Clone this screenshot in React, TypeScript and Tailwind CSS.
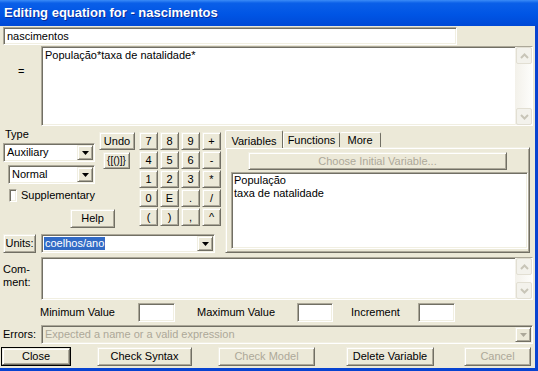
import React from "react";

const raised =
  "border border-t-[#f1efe2] border-l-[#f1efe2] border-r-[#716f64] border-b-[#716f64] shadow-[inset_1px_1px_0_#ffffff,inset_-1px_-1px_0_#aca899]";
const sunken =
  "border border-t-[#aca899] border-l-[#aca899] border-r-white border-b-white shadow-[inset_1px_1px_0_#716f64,inset_-1px_-1px_0_#f1efe2]";

function Btn({
  children,
  className = "",
  disabled,
}: {
  children: React.ReactNode;
  className?: string;
  disabled?: boolean;
}) {
  return (
    <div
      className={`flex items-center justify-center bg-[#ece9d8] leading-none ${raised} ${
        disabled ? "text-[#aca899]" : "text-black"
      } ${className}`}
    >
      {children}
    </div>
  );
}

function Arrow({ color = "#000" }: { color?: string }) {
  return (
    <svg width="7" height="4" viewBox="0 0 7 4">
      <path d="M0 0h7L3.5 4z" fill={color} />
    </svg>
  );
}

function DropBtn({ disabled }: { disabled?: boolean }) {
  return (
    <div className={`w-[16px] h-full flex items-center justify-center bg-[#ece9d8] ${raised}`}>
      <Arrow color={disabled ? "#aca899" : "#000"} />
    </div>
  );
}

function ScrollBtn({ up }: { up?: boolean }) {
  return (
    <div className="h-[17px] w-[16px] rounded-[2px] border border-[#e2dfd3] bg-[#f3f2ec] flex items-center justify-center">
      <svg width="9" height="6" viewBox="0 0 9 6">
        <path
          d={up ? "M1 5l3.5-3.5L8 5" : "M1 1l3.5 3.5L8 1"}
          fill="none"
          stroke="#c8c5b8"
          strokeWidth="2"
        />
      </svg>
    </div>
  );
}

function Scrollbar() {
  return (
    <div className="w-[17px] h-full flex flex-col justify-between bg-[linear-gradient(90deg,#f3f1ea,#fdfdfb)] pl-[1px]">
      <ScrollBtn up />
      <ScrollBtn />
    </div>
  );
}

// keypad, read row by row
const KEYS = ["7", "8", "9", "+", "4", "5", "6", "-", "1", "2", "3", "*", "0", "E", ".", "/", "(", ")", ",", "^"];

export default function App() {
  return (
    <div className="w-[538px] h-[371px] flex flex-col overflow-hidden font-['Liberation_Sans',Arial,sans-serif] text-[11px] text-black">
      {/* Title bar */}
      <div className="h-[26px] shrink-0 flex items-center pl-[4px] bg-[linear-gradient(180deg,#3b8cf7_0%,#0a5fe8_12%,#0055e5_55%,#0049d6_100%)]">
        <span className="text-white font-bold text-[13px] [text-shadow:1px_1px_0_#0a2d9a]">
          Editing equation for - nascimentos
        </span>
      </div>

      <div className="flex-1 flex flex-col bg-[#ece9d8] border-r-[3px] border-b-[3px] border-[#0843d0] overflow-hidden">
        {/* Name */}
        <div className={`ml-[3px] mt-[1px] w-[454px] h-[18px] bg-white pl-[3px] leading-[16px] ${sunken}`}>
          nascimentos
        </div>

        {/* Equation */}
        <div className="flex mt-[1px] h-[80px]">
          <div className="w-[41px] pt-[19px] pl-[18px] leading-[13px]">=</div>
          <div className={`w-[492px] h-full flex bg-white ${sunken}`}>
            <div className="flex-1 pl-[3px] pt-[2px] leading-[13px]">População*taxa de natalidade*</div>
            <Scrollbar />
          </div>
        </div>

        {/* Middle */}
        <div className="flex mt-[1px] h-[126px]">
          <div className="w-[225px] flex flex-col">
            <div className="flex h-[105px]">
              {/* Type column */}
              <div className="w-[95px] pl-[3px] flex flex-col">
                <div className="mt-[1px] h-[13px] leading-[13px] pl-[2px]">Type</div>
                <div className={`mt-[2px] h-[19px] w-[92px] flex bg-white ${sunken} p-[1px]`}>
                  <div className="flex-1 pl-[2px] leading-[15px]">Auxiliary</div>
                  <DropBtn />
                </div>
                <div className={`ml-[5px] mt-[3px] h-[19px] w-[87px] flex bg-white ${sunken} p-[1px]`}>
                  <div className="flex-1 pl-[2px] leading-[15px]">Normal</div>
                  <DropBtn />
                </div>
                <div className="mt-[4px] h-[14px] flex items-center ml-[6px]">
                  <div className={`w-[13px] h-[13px] bg-white ${sunken}`} />
                  <span className="ml-[4px]">Supplementary</span>
                </div>
                <Btn className="ml-[67px] mt-[7px] w-[45px] h-[19px]">Help</Btn>
              </div>

              {/* Undo column */}
              <div className="ml-[4px] w-[36px] pt-[5px] flex flex-col">
                <Btn className="w-[36px] h-[18px]">Undo</Btn>
                <Btn className="ml-[4px] mt-[2px] w-[27px] h-[17px] text-[10px]">{"{[()]}"}</Btn>
              </div>

              {/* Keypad */}
              <div className="ml-[4px] pt-[5px]">
                <div className="grid grid-cols-[repeat(4,19px)] auto-rows-[18px] gap-x-[2px] gap-y-[1px]">
                  {KEYS.map((k) => (
                    <Btn key={k} className="w-[19px] h-[18px]">
                      {k}
                    </Btn>
                  ))}
                </div>
              </div>
            </div>

            {/* Units */}
            <div className="flex mt-[2px] h-[19px]">
              <Btn className="ml-[3px] w-[33px] h-[19px]">Units:</Btn>
              <div className={`ml-[5px] w-[174px] h-[19px] flex bg-white ${sunken} p-[1px]`}>
                <div className="flex-1 pl-[1px] flex items-center">
                  <span className="bg-[#316ac5] text-white px-[1px] leading-[13px]">coelhos/ano</span>
                </div>
                <DropBtn />
              </div>
            </div>
          </div>

          {/* Tabs */}
          <div className="w-[305px] pt-[3px] flex flex-col">
            <div className="flex items-end h-[17px] relative z-10">
              <div className="h-[18px] w-[58px] -mb-[1px] bg-[#ece9d8] border-t border-l border-r border-t-white border-l-white border-r-[#716f64] rounded-t-[2px] flex items-start justify-center pt-[2px]">
                Variables
              </div>
              <div className="h-[15px] w-[57px] bg-[#ece9d8] border-t border-l border-r border-t-white border-l-white border-r-[#716f64] rounded-t-[2px] flex items-center justify-center">
                Functions
              </div>
              <div className="h-[15px] w-[41px] bg-[#ece9d8] border-t border-r border-t-white border-r-[#716f64] rounded-t-[2px] flex items-center justify-center">
                More
              </div>
            </div>
            <div className={`h-[106px] flex flex-col ${raised}`}>
              <Btn disabled className="ml-[22px] mt-[4px] w-[259px] h-[18px]">
                Choose Initial Variable...
              </Btn>
              <div className={`ml-[5px] mt-[2px] w-[297px] h-[77px] bg-white pl-[2px] pt-[1px] leading-[13px] ${sunken}`}>
                <div>População</div>
                <div>taxa de natalidade</div>
              </div>
            </div>
          </div>
        </div>

        {/* Comment */}
        <div className="flex mt-[4px] h-[43px]">
          <div className="w-[41px] pl-[3px] pt-[6px] leading-[13px]">
            <div>Com-</div>
            <div>ment:</div>
          </div>
          <div className={`w-[492px] h-full flex bg-white ${sunken}`}>
            <div className="flex-1" />
            <Scrollbar />
          </div>
        </div>

        {/* Min / Max / Increment */}
        <div className="flex items-center mt-[3px] h-[19px]">
          <div className="ml-[40px] w-[98px]">Minimum Value</div>
          <div className={`w-[37px] h-[19px] bg-white ${sunken}`} />
          <div className="ml-[22px] w-[100px]">Maximum Value</div>
          <div className={`w-[36px] h-[19px] bg-white ${sunken}`} />
          <div className="ml-[18px] w-[67px]">Increment</div>
          <div className={`w-[37px] h-[19px] bg-white ${sunken}`} />
        </div>

        {/* Errors */}
        <div className="flex items-center mt-[3px] h-[19px]">
          <div className="w-[41px] pl-[3px]">Errors:</div>
          <div className={`w-[492px] h-[19px] flex bg-[#ece9d8] ${sunken} p-[1px]`}>
            <div className="flex-1 pl-[2px] leading-[15px] text-[#aca899]">Expected a name or a valid expression</div>
            <DropBtn disabled />
          </div>
        </div>

        {/* Buttons */}
        <div className="flex mt-[3px] h-[19px]">
          <div className="ml-[1px] w-[70px] h-[19px] border border-black">
            <Btn className="w-full h-full">Close</Btn>
          </div>
          <Btn className="ml-[26px] w-[95px] h-[19px]">Check Syntax</Btn>
          <Btn disabled className="ml-[26px] w-[97px] h-[19px]">Check Model</Btn>
          <Btn className="ml-[31px] w-[88px] h-[19px]">Delete Variable</Btn>
          <Btn disabled className="ml-[30px] w-[67px] h-[19px]">Cancel</Btn>
        </div>
      </div>
    </div>
  );
}
